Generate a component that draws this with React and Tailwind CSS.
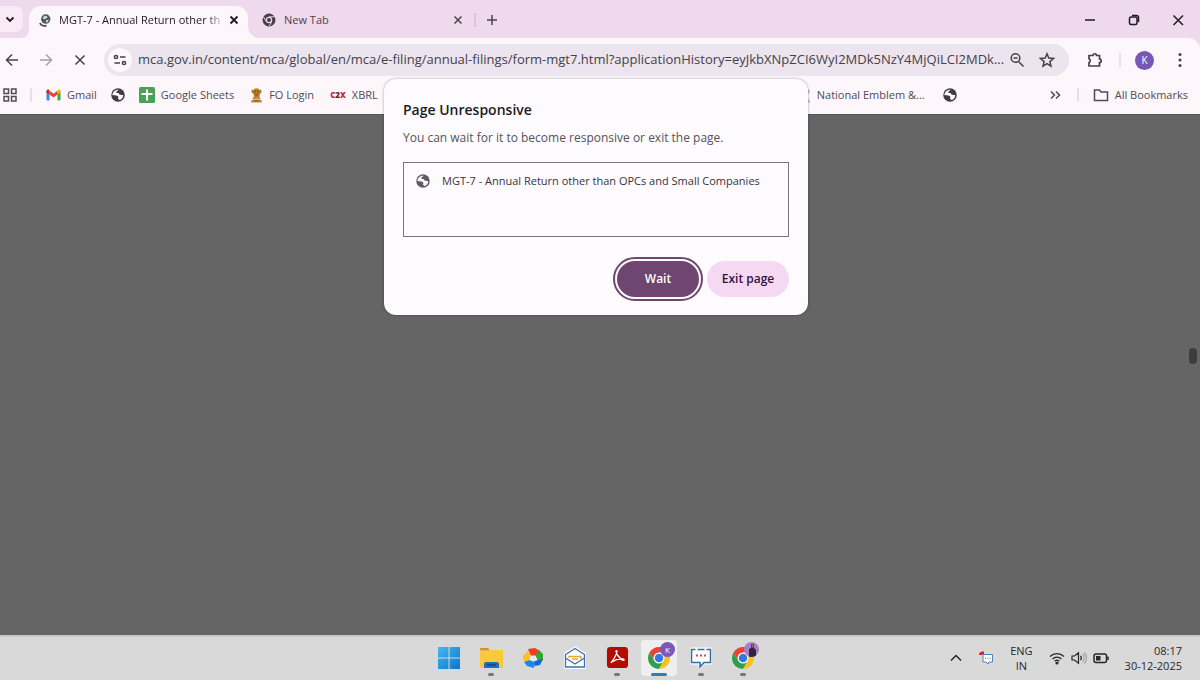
import clsx from 'clsx';

const pageUrl = 'mca.gov.in/content/mca/global/en/mca/e-filing/annual-filings/form-mgt7.html?applicationHistory=eyJkbXNpZCI6WyI2MDk5NzY4MjQiLCI2MDk...';

/* ---------- icons ---------- */

const Globe = ({ className }) => (
    <svg viewBox="0 0 28 28" className={className} aria-hidden="true">
        <circle cx="14" cy="14" r="13.5" fill="currentColor" />
        <path d="M15 3.500c-1 1.500-2 2.500-4 3-1 3 1 3.500 3 3.500 2.500 0 2 3 4 3.500 2 .5 3.500 0 6.500.5 0 5-3 8.500-7 10-1-1-3.500-1.500-3.500-3.500 0-2 1-2.500-.5-3.500-2-1-4 0-6-1.500-1.500-1-3-1-4.500-1C3 8 8 3 15 3.500z" fill="#fdf7fb" />
        <path d="M5 15c2-1 5 0 8.500 1 2 1.500.5 4 .5 5.500-3 3-9-1-9-6.500z" fill="currentColor" />
    </svg>
);

const McaFavicon = () => (
    <svg viewBox="0 0 16 18" className="h-[13px] w-3 shrink-0" aria-hidden="true">
        <circle cx="9" cy="7" r="6.500" fill="#4f5a54" />
        <path d="M8 2.500c3 0 4 1.500 3 3l-3 1.500-3 0c0-2 1-4 3-4.500zM9 8.500l4-.5c0 2-1 3.500-3 4z" fill="#cfd8d2" />
        <path d="M1 12.500c1 3 5 4.500 9 3.500" fill="none" stroke="#5b3a52" strokeWidth="2.500" />
    </svg>
);

const ChromeShape = ({ red, yellow, green, blue, gap, className }) => (
    <svg viewBox="0 0 48 48" className={className} aria-hidden="true">
        <path d="M24 24V13h19.050A22 22 0 0 0 4.950 13l9.520 16.500z" fill={red} />
        <path d="M24 24l9.530 5.500L24 46A22 22 0 0 1 4.950 13l9.520 16.500z" fill={green} />
        <path d="M24 24V13h19.050A22 22 0 0 1 24 46l9.530-16.500z" fill={yellow} />
        {gap && <path d="M24 13h20M14.500 29.500L5 13M33.500 29.500L24 46" stroke={gap} strokeWidth="3" />}
        <circle cx="24" cy="24" r="11" fill={gap || '#fff'} />
        <circle cx="24" cy="24" r={gap ? 7 : 8.500} fill={blue} />
    </svg>
);

const ChromeLogo = ({ className }) => (
    <ChromeShape red="#ea4335" yellow="#fbc116" green="#2d9f4b" blue="#2f78e8" className={className} />
);

const Line = ({ d, size = 'size-4', width = 1.5, children }) => (
    <svg viewBox="0 0 16 16" className={clsx('block shrink-0', size)} fill="none" stroke="currentColor" strokeWidth={width} aria-hidden="true">
        {d && <path d={d} />}
        {children}
    </svg>
);

const Gmail = () => (
    <svg viewBox="0 0 30 24" className="w-[15px]" aria-hidden="true">
        <path d="M1 4v17q0 2 2 2h4V9z" fill="#4285f4" />
        <path d="M29 4v17q0 2-2 2h-4V9z" fill="#34a853" />
        <path d="M23 3.500V11l6-4.500V4c0-3-3-4-5-2.500z" fill="#fbbc04" />
        <path d="M1 4v3l6 4V3.500L6 1.500C4 0 1 1 1 4z" fill="#c5221f" />
        <path d="M7 3.500V11l8 6 8-6V3.500l-8 6z" fill="#ea4335" />
    </svg>
);

const Sheets = () => (
    <svg viewBox="0 0 16 16" className="size-4" aria-hidden="true">
        <rect width="16" height="16" rx="1.500" fill="#4ba155" />
        <path d="M8 2.500v11M2.500 7h11" stroke="#fff" strokeWidth="2" />
    </svg>
);

const Emblem = ({ body = '#b5792a', base = '#c48a35', detail = '#704515' }) => (
    <svg viewBox="0 0 14 16" className="h-[15px] w-[13px]" aria-hidden="true">
        <path d="M2 1.500l2 .5 1-1.500h4l1 1.500 2-.5.500 3-1.500 1.500-1 2.500.500 2H4l.5-2-1-2.500L1.500 4.500z" fill={body} />
        <path d="M3 10h8v2H3zM2 12.500h10l1 3H1z" fill={base} />
        <path d="M5 3h1v2H5zm3 0h1v2H8zM6 7h2v1H6zM4 13.500h6v.8H4z" fill={detail} />
    </svg>
);

const WindowsLogo = () => (
    <svg viewBox="0 0 24 24" className="size-6" aria-hidden="true">
        <defs>
            <linearGradient id="win" x1="0" y1="0" x2="1" y2="1">
                <stop offset="0" stopColor="#45b8f2" />
                <stop offset="1" stopColor="#0f74c8" />
            </linearGradient>
        </defs>
        <path d="M1 1h10.500v10.500H1zM12.500 1H23v10.500H12.500zM1 12.500h10.500V23H1zM12.500 12.500H23V23H12.500z" fill="url(#win)" />
    </svg>
);

const Explorer = () => (
    <svg viewBox="0 0 24 24" className="size-6" aria-hidden="true">
        <path d="M1 3q0-1 1-1h7l2 2.500H1z" fill="#d9930f" />
        <path d="M1 5l9-.5L12 4h11q1 0 1 1v16q0 1-1 1H2q-1 0-1-1z" fill="#fbc840" />
        <path d="M5 22v-4q0-2 2-2h11q2 0 2 2v4z" fill="#1f6fb8" />
        <path d="M8 19h9" stroke="#123f78" strokeWidth="1.500" />
    </svg>
);

const Pinwheel = () => (
    <svg viewBox="0 0 24 24" className="size-6" aria-hidden="true">
        <path d="M7 3l7-1 5 3-3 5-6 0z" fill="#ef3f23" />
        <path d="M18 4l4 4v6l-4 2-4-6z" fill="#2fa82e" />
        <path d="M22 13l-3 6-5 1-2-4 5-2z" fill="#1565d8" />
        <path d="M14 16l-1 6-7-2-3-4 5-2z" fill="#1b86f0" />
        <path d="M3 16l-1-6 5-5 3 5-2 4z" fill="#fbc317" />
        <path d="M9.500 9.500h5l1.500 3.500-3.500 2.500L9 14z" fill="#e4e9f0" />
    </svg>
);

const Mail = () => (
    <svg viewBox="0 0 24 24" className="size-6" fill="none" aria-hidden="true">
        <path d="M2.500 8L12 2l9.500 6v13.500h-19z" fill="#fff" stroke="#fff" strokeWidth="3" strokeLinejoin="round" />
        <path d="M2.500 8.500L12 2.500l9.500 6v12.500h-19z" stroke="#3b6fae" strokeWidth="1.300" />
        <path d="M2.500 12l9.500 6 9.500-6" stroke="#3b6fae" strokeWidth="1.300" />
        <path d="M6 12V10.500h12V13M9 13h6" stroke="#eaa63c" strokeWidth="1.300" />
    </svg>
);

const Acrobat = () => (
    <svg viewBox="0 0 24 24" className="size-[23px]" aria-hidden="true">
        <rect x="1" y="1" width="22" height="22" rx="3.500" fill="#b30b00" />
        <path d="M5.500 17c2-2 6-9 6-11.500 0-1-1-1-1 0 0 3 4.500 8.500 7.500 9.500 1.500 0 1-1.500-.5-1.500-3.500-.3-9 1.500-11.500 3.200-1 .8-.5.8-.5.3z" fill="none" stroke="#fff" strokeWidth="1.400" />
    </svg>
);

const Chat = () => (
    <svg viewBox="0 0 24 24" className="size-6" fill="none" aria-hidden="true">
        <path d="M2.500 3h19v14H14l-3 4.500V17H2.500z" fill="#fff" stroke="#fff" strokeWidth="3" strokeLinejoin="round" />
        <path d="M6.500 3.500h-4v13H11V21l4-4.500h6.500v-13h-4M8.500 3.500h7" stroke="#2f6f9f" strokeWidth="1.500" />
        <path d="M7 9.500h2M11 9.500h2M15 9.500h2" stroke="#d94a3d" strokeWidth="2" />
    </svg>
);

/* ---------- window parts ---------- */

const IconButton = ({ label, className, children }) => (
    <button type="button" aria-label={label} className={clsx('flex shrink-0 items-center justify-center', className)}>
        {children}
    </button>
);

const Divider = ({ className, color = 'bg-[#f0d9ee]' }) => (
    <span className={clsx('h-3.5 w-0.5 shrink-0 rounded', color, className)} />
);

const TabStrip = () => (
    <div className="flex h-[38px] bg-[#fdf7fb] text-[#1f1b20]">
        <div className="flex w-[29px] shrink-0 items-center rounded-br-lg bg-[#efd9ec]">
            <IconButton label="Search tabs" className="h-[26px] w-[23px] rounded-r-lg bg-[#f9ebf6] pr-1">
                <Line d="M4.500 6.500L8 10l3.500-3.500" width={1.8} />
            </IconButton>
        </div>
        <div className="w-[219px] shrink-0 bg-[#efd9ec] pt-1.5">
            <div className="flex h-8 items-center rounded-t-xl bg-[#fdf7fb] pr-1.5 pb-1 pl-2.5">
                <McaFavicon />
                <span className="ml-2 flex-1 text-[11px] whitespace-nowrap [mask-image:linear-gradient(to_right,black_88%,transparent)]">
                    MGT-7 - Annual Return other th
                </span>
                <IconButton label="Close tab" className="size-4">
                    <Line d="M4.500 4.500l7 7M11.500 4.500l-7 7" width={1.8} />
                </IconButton>
            </div>
        </div>
        <div className="flex min-w-0 flex-1 items-center rounded-bl-xl bg-[#efd9ec] pt-0.5 text-[#4d444c]">
            <div className="flex w-[226px] items-center pr-2 pl-3.5">
                <ChromeShape red="#45414a" yellow="#45414a" green="#45414a" blue="#45414a" gap="#efd9ec" className="size-3.5" />
                <span className="ml-2 flex-1 text-[11px]">New Tab</span>
                <IconButton label="Close tab" className="size-4">
                    <Line d="M4.500 4.500l7 7M11.500 4.500l-7 7" />
                </IconButton>
            </div>
            <Divider color="bg-[#e5bfe2]" />
            <IconButton label="New tab" className="ml-2 size-4">
                <Line d="M8 3v10M3 8h10" />
            </IconButton>
            <div className="ml-auto flex gap-5 pr-2.5 text-[#1f1b20]">
                <IconButton label="Minimize" className="size-6">
                    <Line d="M3 8h10" />
                </IconButton>
                <IconButton label="Restore" className="size-6">
                    <Line>
                        <rect x="3.500" y="5" width="7.500" height="7.500" rx="1.500" />
                        <path d="M6 3.500h4.500q2 0 2 2V10" />
                    </Line>
                </IconButton>
                <IconButton label="Close" className="size-6">
                    <Line d="M3.500 3.500l9.500 9.500M13 3.500L3.500 13" />
                </IconButton>
            </div>
        </div>
    </div>
);

const Toolbar = () => (
    <div className="flex h-11 items-center rounded-tr-xl bg-[#fdf7fb] pr-2 text-[#45414a]">
        <IconButton label="Back" className="size-6">
            <Line d="M14 8H3M8 2.500L2.500 8 8 13.500" />
        </IconButton>
        <IconButton label="Forward" className="ml-2.5 size-6 text-[#a59fa6]">
            <Line d="M2 8h11M8 2.500L13.500 8 8 13.500" />
        </IconButton>
        <IconButton label="Stop loading" className="ml-2.5 size-6">
            <Line d="M3.500 3.500l9 9M12.500 3.500l-9 9" />
        </IconButton>
        <div className="ml-3 flex h-8 min-w-0 flex-1 items-center rounded-full bg-[#ece4ee] pr-2.5 pl-1">
            <IconButton label="View site information" className="size-6 rounded-full bg-[#fdf7fb]">
                <Line>
                    <circle cx="4" cy="5" r="1.600" />
                    <path d="M8 5h5.500M2.500 11H8" />
                    <circle cx="12" cy="11" r="1.600" />
                </Line>
            </IconButton>
            <input
                type="text"
                aria-label="Address and search bar"
                defaultValue={pageUrl}
                className="ml-1.5 min-w-0 flex-1 bg-transparent text-[13px] outline-none"
            />
            <IconButton label="Zoom" className="size-6">
                <Line>
                    <circle cx="6.500" cy="6" r="4.300" />
                    <path d="M9.500 9.500l5 5M4.500 6h4" />
                </Line>
            </IconButton>
            <IconButton label="Bookmark this tab" className="ml-1.5 size-6">
                <Line d="M8 1.800l1.800 4.300 4.700.4-3.600 3.100 1.100 4.600L8 11.700l-4 2.500 1.100-4.600L1.500 6.500l4.700-.4z" />
            </IconButton>
        </div>
        <IconButton label="Extensions" className="ml-3.5 size-6">
            <Line d="M2 3.500h4a1.500 1.500 0 0 1 3.500 0H12.500V7a1.500 1.500 0 0 1 0 3.500V14H2v-3.500a2 2 0 0 0 0-3.700z" width={1.700} />
        </IconButton>
        <Divider className="ml-3" />
        <button type="button" aria-label="Profile" className="ml-3.5 size-[19px] rounded-full bg-[#7757b8] text-center text-[10px] leading-[19px] text-white">K</button>
        <IconButton label="Menu" className="ml-3.5 size-6">
            <svg viewBox="0 0 16 16" className="size-4" fill="currentColor" aria-hidden="true">
                <circle cx="8" cy="2.500" r="1.500" />
                <circle cx="8" cy="8" r="1.500" />
                <circle cx="8" cy="13.500" r="1.500" />
            </svg>
        </IconButton>
    </div>
);

const Bookmark = ({ icon, label, className }) => (
    <a href="#" aria-label={label || 'Bookmark'} className={clsx('flex shrink-0 items-center gap-1.5', className)}>
        {icon}
        {label}
    </a>
);

const BookmarksBar = () => (
    <nav className="flex h-8 items-center bg-[#fdf7fb] pr-3 pb-1.5 pl-0.5 text-[11px] text-[#514b53]">
        <IconButton label="Tab groups" className="size-4">
            <Line d="M2 2h4.500v4.500H2zM9.500 2H14v4.500H9.500zM2 9.500h4.500V14H2zM9.500 9.500H14V14H9.500z" />
        </IconButton>
        <Divider className="ml-3" />
        <Bookmark className="ml-3.5" icon={<Gmail />} label="Gmail" />
        <Bookmark className="ml-3.5" icon={<Globe className="size-3.5 text-[#3f3c42]" />} />
        <Bookmark className="ml-3.5" icon={<Sheets />} label="Google Sheets" />
        <Bookmark className="ml-4" icon={<Emblem />} label="FO Login" />
        <Bookmark
            className="ml-4"
            icon={<span className="text-[8px] font-extrabold text-[#c22735]">C<span className="text-[#5b2a35]">2</span>X</span>}
            label="XBRL"
        />
        <Bookmark className="ml-auto" icon={<Emblem body="#bbb5bb" base="#bbb5bb" detail="#8f898f" />} label="National Emblem &..." />
        <Bookmark className="ml-[18px]" icon={<Globe className="size-3.5 text-[#3f3c42]" />} />
        <IconButton label="More bookmarks" className="ml-[90px] size-4">
            <Line d="M4 4.500L7.500 8 4 11.500M9 4.500L12.500 8 9 11.500" />
        </IconButton>
        <Divider className="ml-3.5" />
        <Bookmark
            className="ml-3.5"
            icon={<Line d="M1.500 3h5l1.500 2h6.500v8.500h-13z" />}
            label="All Bookmarks"
        />
    </nav>
);

const UnresponsiveDialog = () => (
    <div className="absolute inset-x-0 top-[79px] flex justify-center pr-2">
        <div role="dialog" aria-labelledby="dialog-title" className="w-[424px] rounded-xl bg-[#fefbff] px-[19px] pt-[21px] pb-[18px] shadow-[0_0_3px_rgba(0,0,0,0.35)]">
            <h1 id="dialog-title" className="text-[14px] leading-5 font-semibold text-[#1c1b1f]">Page Unresponsive</h1>
            <p className="mt-2 text-[12px] leading-5 text-[#55525a]">You can wait for it to become responsive or exit the page.</p>
            <div className="mt-3.5 h-[75px] border border-[#77757a] px-3 pt-2">
                <div className="flex items-center gap-3 text-[11px] leading-5 text-[#36343a]">
                    <Globe className="size-3.5 text-[#5c5c60]" />
                    MGT-7 - Annual Return other than OPCs and Small Companies
                </div>
            </div>
            <div className="mt-6 flex justify-end gap-2 text-[12px] font-semibold">
                <button type="button" className="h-9 w-[82px] rounded-full bg-[#6e466f] text-white outline-2 outline-offset-2 outline-[#6e466f]">Wait</button>
                <button type="button" className="h-9 w-[82px] rounded-full bg-[#f5d9f3] text-[#34113a]">Exit page</button>
            </div>
        </div>
    </div>
);

const taskbarApps = [
    { name: 'Start', icon: <WindowsLogo /> },
    { name: 'File Explorer', icon: <Explorer />, running: true },
    { name: 'Photos', icon: <Pinwheel /> },
    { name: 'Mail', icon: <Mail /> },
    { name: 'Acrobat', icon: <Acrobat />, running: true },
    {
        name: 'Chrome, profile K',
        icon: <ChromeLogo className="size-6" />,
        badge: <span className="bg-[#7b57bd] text-white">K</span>,
        active: true,
    },
    { name: 'Chat', icon: <Chat />, running: true },
    {
        name: 'Chrome',
        icon: <ChromeLogo className="size-6" />,
        badge: (
            <svg viewBox="0 0 15 15" aria-hidden="true">
                <rect width="15" height="15" fill="#a87fc9" />
                <path d="M5 15V7l2-1V2h3v4l2 2v7z" fill="#33243f" />
                <path d="M7.500 2.500h2v3h-2z" fill="#a7705c" />
            </svg>
        ),
        running: true,
    },
];

const Taskbar = () => (
    <footer className="grid h-[45px] grid-cols-[1fr_auto_1fr] items-center border-t-2 border-[#c9c9c9] bg-[#d9d9d9] pr-2 pb-0.5 text-[11px] text-[#27272a]">
        <div />
        <div className="flex gap-1.5">
            {taskbarApps.map((app) => (
                <button
                    key={app.name}
                    type="button"
                    aria-label={app.name}
                    className={clsx('relative flex size-9 items-center justify-center rounded', app.active && 'bg-[#efefef]')}
                >
                    {app.icon}
                    {app.badge && (
                        <span className="absolute top-0.5 right-0.5 size-[15px] overflow-hidden rounded-full text-[8px] leading-[15px] *:block *:size-full">
                            {app.badge}
                        </span>
                    )}
                    {app.running && <span className="absolute bottom-0 h-[3px] w-1.5 rounded-full bg-[#77777a]" />}
                    {app.active && <span className="absolute bottom-0 h-[3px] w-4 rounded-full bg-[#2f7fb4]" />}
                </button>
            ))}
        </div>
        <div className="flex items-center justify-end pr-2.5">
            <IconButton label="Show hidden icons" className="size-4">
                <Line d="M3 10.500l5-5 5 5" />
            </IconButton>
            <svg viewBox="0 0 16 16" className="ml-3.5 size-4" fill="none" aria-hidden="true">
                <path d="M1 5q0-4 5-3.500V4L3 5z" fill="#c9202b" />
                <path d="M5 4.500h9.500V12H11l-1 2-2-2H5z" fill="#fff" stroke="#4b82b8" />
                <path d="M7 8.200h1M9.300 8.200h1M11.600 8.200h1" stroke="#4b82b8" />
            </svg>
            <div className="ml-4 text-center leading-[15px]">
                <div>ENG</div>
                <div>IN</div>
            </div>
            <div className="ml-4 flex items-center gap-1.5">
                <Line width={1.2}>
                    <path d="M1 6.500a10 10 0 0 1 14 0M3.500 9a6.500 6.500 0 0 1 9 0M5.700 11.300a3.300 3.300 0 0 1 4.600 0" />
                    <circle cx="8" cy="13" r="1" fill="currentColor" />
                </Line>
                <Line width={1.2}>
                    <path d="M1 6h2.500L7.500 2.800v10.400L3.500 10H1zM9.500 5.800a3.500 3.500 0 0 1 0 4.400" />
                    <path d="M11.500 4a6 6 0 0 1 0 8M13.300 2.500a8 8 0 0 1 0 11" stroke="#a3a3a6" />
                </Line>
                <Line>
                    <rect x="1" y="4" width="12.500" height="8.500" rx="2" />
                    <path d="M3 6h4.500v4.500H3z" fill="currentColor" stroke="none" />
                    <path d="M15 6.500v3.500" />
                </Line>
            </div>
            <div className="ml-4 text-right leading-[15px]">
                <div>08:17</div>
                <div>30-12-2025</div>
            </div>
        </div>
    </footer>
);

export default function App() {
    return (
        <div className="relative flex min-h-screen flex-col bg-[#efd9ec] font-['Open_Sans',sans-serif]">
            <TabStrip />
            <Toolbar />
            <BookmarksBar />
            <main className="flex flex-1 justify-end border-t border-[#555] bg-[#656565] px-[3px]">
                <div className="mt-[233px] h-4 w-2 rounded-full bg-[#3c3c3c]" />
            </main>
            <Taskbar />
            <UnresponsiveDialog />
        </div>
    );
}
